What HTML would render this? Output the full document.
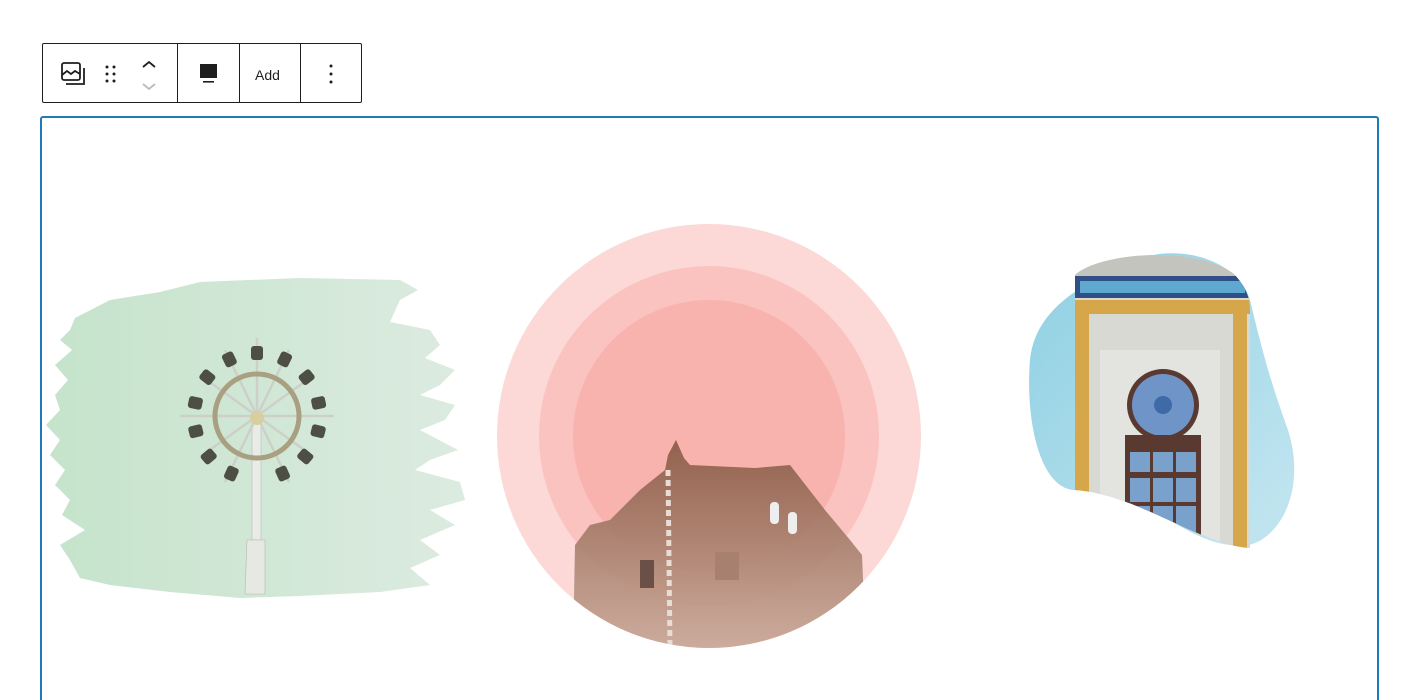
<!DOCTYPE html>
<html><head><meta charset="utf-8"><style>
html,body{margin:0;padding:0;background:#fff;width:1403px;height:700px;overflow:hidden;font-family:"Liberation Sans",sans-serif}
#wrap{position:relative;width:1403px;height:700px;overflow:hidden}
.tb{position:absolute;left:42px;top:43px;width:318px;height:58px;border:1px solid #1e1e1e;border-radius:2px;background:#fff}
.sep{position:absolute;top:0;width:1px;height:58px;background:#1e1e1e}
.blk{position:absolute;left:40px;top:116px;width:1335px;height:582px;border:2px solid #1f7bb8;border-bottom:none;border-radius:3px 3px 0 0}
svg{position:absolute;left:0;top:0}
</style></head><body><div id="wrap">
<div class="tb">
 <div class="sep" style="left:134px"></div>
 <div class="sep" style="left:196px"></div>
 <div class="sep" style="left:257px"></div>
 <svg width="318" height="58" viewBox="0 0 318 58">
  <g fill="none" stroke="#1e1e1e" stroke-width="1.8">
   <rect x="19" y="19" width="18" height="17" rx="2"/>
   <path d="M19 31 l5-4 4 3 4-3 5 3"/>
   <path d="M41 24 v16 h-18"/>
   <path d="M100 23 l6-5 6 5"/>
  </g>
  <path d="M100 40 l6 5 6-5" fill="none" stroke="#bbb" stroke-width="1.8"/>
  <g fill="#1e1e1e">
   <circle cx="64" cy="23" r="1.5"/><circle cx="71" cy="23" r="1.5"/>
   <circle cx="64" cy="30" r="1.5"/><circle cx="71" cy="30" r="1.5"/>
   <circle cx="64" cy="37" r="1.5"/><circle cx="71" cy="37" r="1.5"/>
   <rect x="157" y="20" width="17" height="14"/>
   <rect x="160" y="37" width="11" height="1.6"/>
   <circle cx="288" cy="22" r="1.5"/><circle cx="288" cy="30" r="1.5"/><circle cx="288" cy="38" r="1.5"/>
  </g>
  <text x="212" y="36" font-size="14" fill="#1e1e1e" font-family="Liberation Sans, sans-serif">Add</text>
 </svg>
</div>
<div class="blk"></div>
<svg width="1403" height="700" viewBox="0 0 1403 700">
 <defs>
  <linearGradient id="g1" x1="0" x2="1"><stop offset="0" stop-color="#c5e3cb"/><stop offset="1" stop-color="#dcebe0"/></linearGradient>
  <linearGradient id="br" x1="0" y1="0" x2="0" y2="1"><stop offset="0" stop-color="#8a5a46"/><stop offset="1" stop-color="#c9a898"/></linearGradient>
  <clipPath id="cc"><circle cx="709" cy="436" r="212"/></clipPath>
  <clipPath id="bc"><path d="M1075 275 C1100 252 1200 245 1235 275 C1248 290 1250 300 1250 310 L1250 548 C1200 545 1140 495 1075 490 Z"/></clipPath>
  <linearGradient id="sk" x1="0" y1="0" x2="1" y2="1"><stop offset="0" stop-color="#8fd0e3"/><stop offset="1" stop-color="#c4e6f0"/></linearGradient>
 </defs>
 <path fill="url(#g1)" d="M75 318 L110 300 L160 292 L200 282 L300 278 L400 280 L418 290 L400 300 L390 322 L430 330 L440 345 L425 358 L455 370 L440 385 L420 395 L455 405 L445 420 L420 430 L458 450 L430 460 L415 470 L460 482 L465 500 L430 510 L455 525 L420 540 L440 555 L410 568 L430 585 L380 592 L300 596 L240 598 L170 592 L110 585 L80 578 L70 560 L60 545 L85 530 L62 515 L70 500 L55 485 L65 470 L50 455 L60 440 L46 425 L60 410 L55 395 L68 380 L55 365 L72 350 L60 340 L70 330 Z"/>
 <g>
  <rect x="252" y="420" width="9" height="120" fill="#e8ebe6" stroke="#b9bdb6" stroke-width="0.6"/>
  <path d="M247 540 h18 v54 h-20 z" fill="#e6e8e3" stroke="#b4b8b0" stroke-width="0.6"/>
  <g stroke="#ccd0c8" stroke-width="2.5">
   <line x1="180" y1="416" x2="334" y2="416"/>
   <line x1="257" y1="338" x2="257" y2="416"/>
   <line x1="200" y1="375" x2="314" y2="457"/>
   <line x1="314" y1="375" x2="200" y2="457"/>
   <line x1="225" y1="350" x2="289" y2="482"/>
   <line x1="289" y1="350" x2="225" y2="482"/>
  </g>
  <circle cx="257" cy="416" r="42" fill="none" stroke="#a8a080" stroke-width="5"/>
  <circle cx="257" cy="418" r="7" fill="#d8cfa0"/>
  <g fill="#4d4f45">
   <g transform="rotate(0 257 416)"><rect x="251" y="346" width="12" height="14" rx="3"/></g>
   <g transform="rotate(26 257 416)"><rect x="251" y="346" width="12" height="14" rx="3"/></g>
   <g transform="rotate(52 257 416)"><rect x="251" y="346" width="12" height="14" rx="3"/></g>
   <g transform="rotate(78 257 416)"><rect x="251" y="346" width="12" height="14" rx="3"/></g>
   <g transform="rotate(104 257 416)"><rect x="251" y="346" width="12" height="14" rx="3"/></g>
   <g transform="rotate(130 257 416)"><rect x="251" y="346" width="12" height="14" rx="3"/></g>
   <g transform="rotate(156 257 416)"><rect x="251" y="346" width="12" height="14" rx="3"/></g>
   <g transform="rotate(-26 257 416)"><rect x="251" y="346" width="12" height="14" rx="3"/></g>
   <g transform="rotate(-52 257 416)"><rect x="251" y="346" width="12" height="14" rx="3"/></g>
   <g transform="rotate(-78 257 416)"><rect x="251" y="346" width="12" height="14" rx="3"/></g>
   <g transform="rotate(-104 257 416)"><rect x="251" y="346" width="12" height="14" rx="3"/></g>
   <g transform="rotate(-130 257 416)"><rect x="251" y="346" width="12" height="14" rx="3"/></g>
   <g transform="rotate(-156 257 416)"><rect x="251" y="346" width="12" height="14" rx="3"/></g>
  </g>
 </g>
 <circle cx="709" cy="436" r="212" fill="#fcd8d6"/>
 <circle cx="709" cy="436" r="170" fill="#fac3c0"/>
 <circle cx="709" cy="436" r="136" fill="#f9b3ae"/>
 <g clip-path="url(#cc)">
  <path fill="url(#br)" opacity="0.92" d="M573 650 L575 545 L590 525 L610 520 L640 490 L665 470 L668 455 L676 440 L684 458 L690 465 L755 468 L790 465 L825 510 L850 540 L862 555 L866 650 Z"/>
  <path d="M668 470 L670 650" stroke="#e8ddd5" stroke-width="5" stroke-dasharray="6 4"/>
  <rect x="770" y="502" width="9" height="22" fill="#eee" rx="4"/>
  <rect x="788" y="512" width="9" height="22" fill="#eee" rx="4"/>
  <rect x="715" y="552" width="24" height="28" fill="#a88070"/>
  <rect x="640" y="560" width="14" height="28" fill="#6b5048"/>
 </g>
 <path fill="url(#sk)" d="M1130 262 C1180 240 1240 262 1250 300 C1262 350 1270 380 1288 430 C1310 500 1270 555 1230 545 C1180 540 1130 480 1080 490 C1040 495 1025 420 1030 360 C1035 310 1080 285 1130 262 Z"/>
 <g clip-path="url(#bc)">
  <rect x="1075" y="250" width="175" height="300" fill="#d9d9d4"/>
  <rect x="1075" y="250" width="175" height="26" fill="#c4c4be"/>
  <rect x="1075" y="276" width="175" height="22" fill="#2f4f86"/>
  <rect x="1080" y="281" width="165" height="12" fill="#5fa8d0"/>
  <rect x="1075" y="300" width="175" height="14" fill="#d6a64a"/>
  <rect x="1075" y="300" width="14" height="248" fill="#d6a64a"/>
  <rect x="1233" y="300" width="14" height="248" fill="#d6a64a"/>
  <rect x="1100" y="350" width="120" height="200" fill="#e3e3df"/>
  <circle cx="1163" cy="405" r="36" fill="#5a3a30"/>
  <circle cx="1163" cy="405" r="31" fill="#6f94c8"/>
  <circle cx="1163" cy="405" r="9" fill="#3f6aa8"/>
  <rect x="1125" y="435" width="76" height="110" fill="#5a3a30"/>
  <g fill="#7aa0cc"><rect x="1130" y="452" width="20" height="20"/><rect x="1153" y="452" width="20" height="20"/><rect x="1176" y="452" width="20" height="20"/><rect x="1130" y="478" width="20" height="24"/><rect x="1153" y="478" width="20" height="24"/><rect x="1176" y="478" width="20" height="24"/><rect x="1130" y="506" width="20" height="28"/><rect x="1153" y="506" width="20" height="28"/><rect x="1176" y="506" width="20" height="28"/></g>
 </g>
</svg>
</div></body></html>
